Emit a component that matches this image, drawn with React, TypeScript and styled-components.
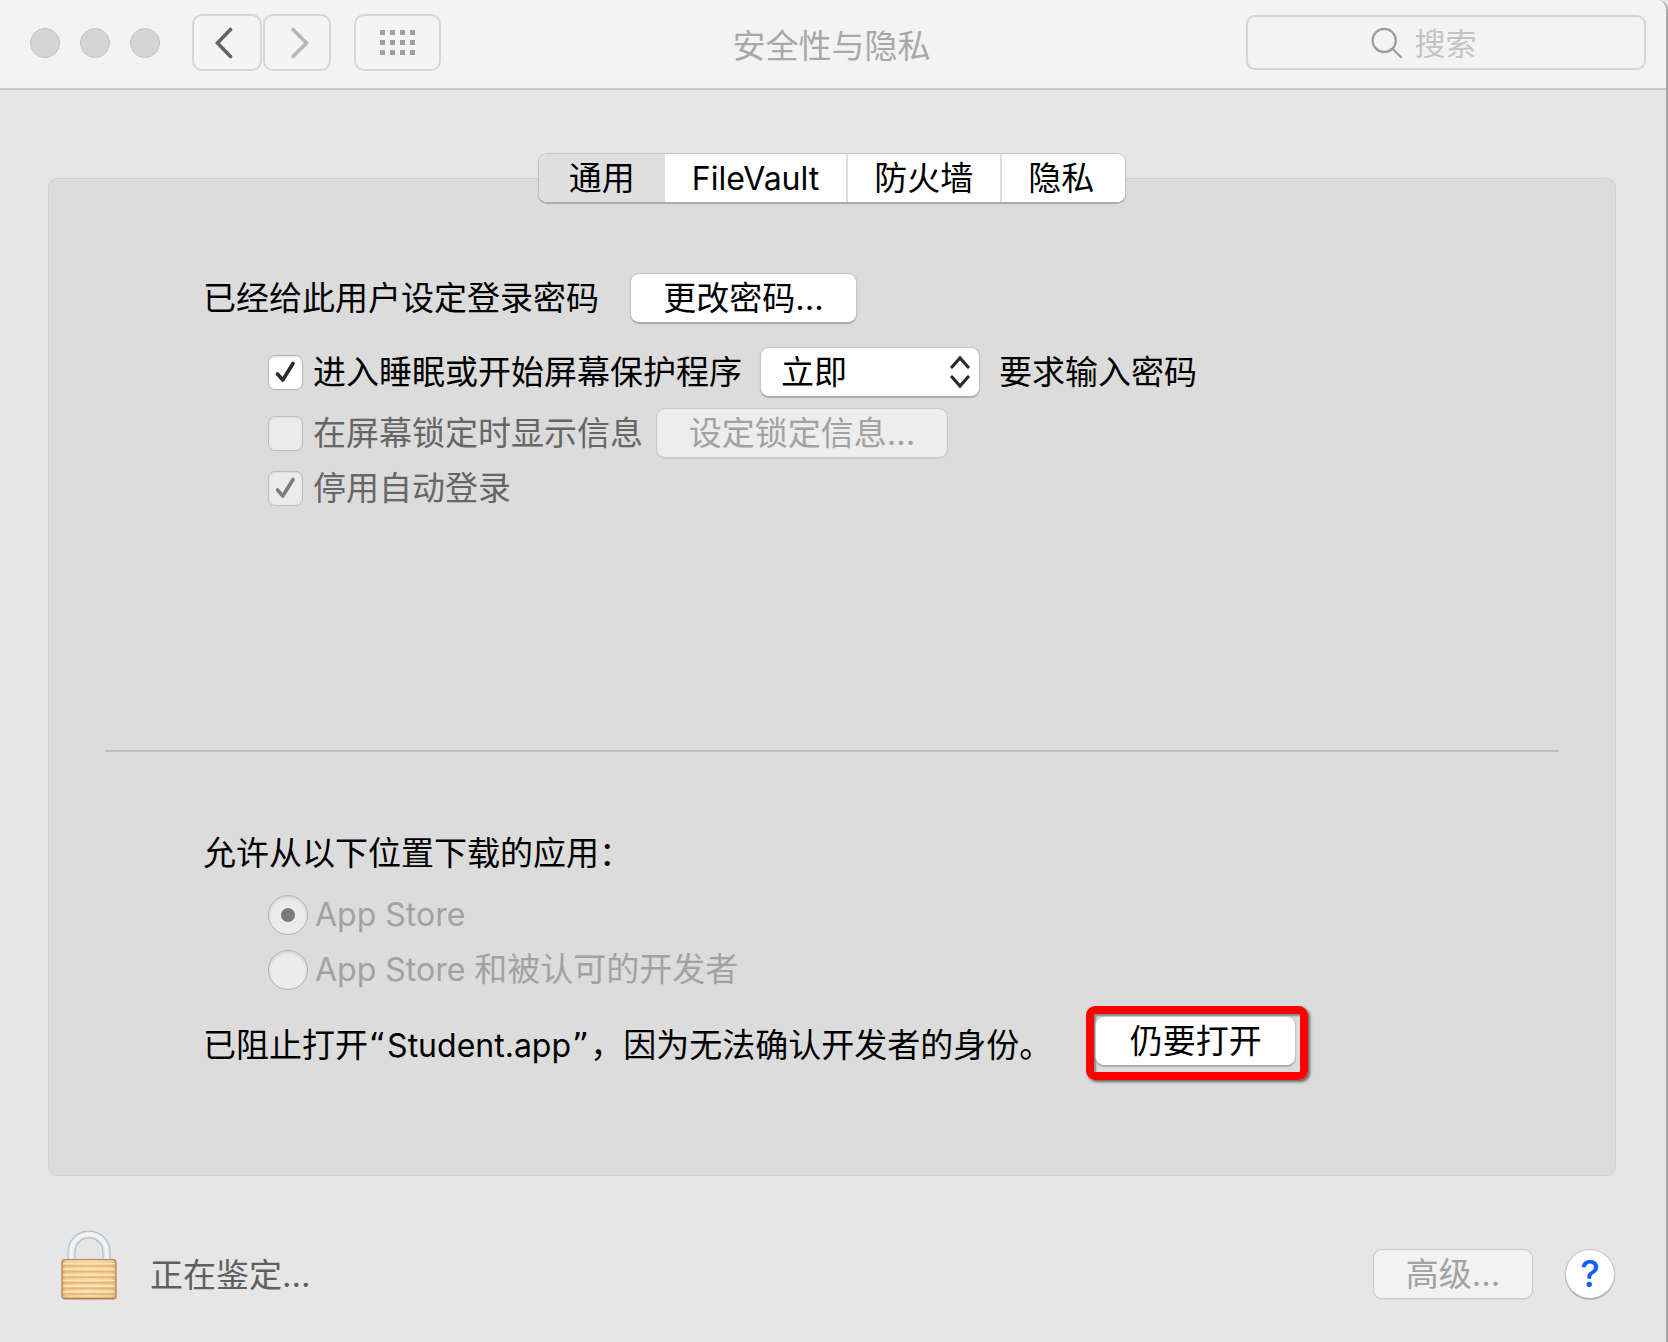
import React, { useState } from "react";
import styled, { createGlobalStyle, css } from "styled-components";

const GlobalStyle = createGlobalStyle`
  *, *::before, *::after { box-sizing: border-box; }
  body {
    margin: 0;
    background: #e6e6e6;
    color: #000;
    font-family: Inter, "Noto Sans CJK SC", sans-serif;
    font-size: 33px;
    line-height: 50px;
  }
  button, input, select { font: inherit; color: inherit; margin: 0; }
`;

const Window = styled.div`
  display: flex;
  flex-direction: column;
  min-height: 100vh;
  border-right: 2px solid #a6a6a6;
  border-top-right-radius: 10px;
  background: #e6e6e6;
  overflow: hidden;
`;

const TitleBar = styled.header`
  display: grid;
  grid-template-columns: 1fr auto 1fr;
  align-items: center;
  height: 90px;
  padding-bottom: 3px;
  background: #f3f3f3;
  border-bottom: 2px solid #c6c6c6;
`;

const Controls = styled.div`
  display: flex;
  align-items: center;
  padding-left: 30px;
`;

const Lights = styled.div`
  display: flex;
  gap: 20px;
  margin-right: 32px;
`;

const Light = styled.button`
  width: 30px;
  height: 30px;
  padding: 0;
  border: 1px solid #c2c2c2;
  border-radius: 50%;
  background: #d5d5d5;
`;

const ToolButton = styled.button<{ $width: number }>`
  display: grid;
  place-items: center;
  width: ${(p) => p.$width}px;
  height: 57px;
  padding: 0;
  border: 2px solid #d6d6d6;
  border-radius: 10px;
  background: #f4f4f4;
  & + & { margin-left: 1px; }
`;

const GridSlot = styled.div`
  margin-left: 23px;
`;

const Title = styled.h1`
  margin: 0;
  padding: 6px 3px 0 0;
  font-size: 33px;
  font-weight: 400;
  color: #a8a8a8;
`;

const SearchBox = styled.label`
  justify-self: end;
  display: flex;
  align-items: center;
  justify-content: center;
  gap: 12px;
  width: 400px;
  height: 55px;
  margin-right: 20px;
  border: 2px solid #d4d4d4;
  border-radius: 9px;
`;

const SearchInput = styled.input`
  width: 107px;
  height: 50px;
  padding: 2px 0 0;
  border: 0;
  outline: 0;
  background: none;
  font-size: 31px;
  color: #555;
  &::placeholder { color: #c4c4c4; opacity: 1; }
`;

const Content = styled.main`
  display: flex;
  flex-direction: column;
  padding: 63px 50px 0 48px;
`;

const raised = css`
  border: 1px solid #c3c3c3;
  border-bottom-color: #a9a9a9;
  border-radius: 9px;
  background: #fff;
  box-shadow: 0 1px 1px rgba(0, 0, 0, 0.22);
`;

const Tabs = styled.div`
  ${raised}
  position: relative;
  z-index: 1;
  display: flex;
  align-self: center;
  height: 50px;
  margin-bottom: -25px;
  overflow: hidden;
`;

const Tab = styled.button<{ $active: boolean }>`
  padding: 0 30px;
  border: 0;
  line-height: 48px;
  background: ${(p) => (p.$active ? "#dfdfdf" : "#fff")};
  & + & { padding: 0 27px; }
  & + & + & { padding: 0 27px 0 26px; border-left: 2px solid #dcdcdc; }
  & + &:last-child { padding-right: 31px; }
`;

const Latin = styled.span`
  font-size: 32px;
`;

const Quote = styled.span`
  margin: 0 1px;
  font-family: "DejaVu Sans", sans-serif;
`;

const Panel = styled.section`
  padding: 94px 55px 95px;
  border: 1px solid #d2d2d2;
  border-radius: 9px;
  background: #dcdcdc;
`;

const Group = styled.div`
  padding-left: 99px;
`;

const Row = styled.div<{ $indent?: boolean; $top?: number }>`
  display: flex;
  align-items: center;
  min-height: 50px;
  margin-top: ${(p) => p.$top ?? 0}px;
  padding-left: ${(p) => (p.$indent ? 65 : 0)}px;
  white-space: nowrap;
`;

const PushButton = styled.button<{ $width: number }>`
  ${raised}
  width: ${(p) => p.$width}px;
  height: 50px;
  padding: 0;
  line-height: 48px;
  &:disabled {
    color: #a2a2a2;
    background: rgba(255, 255, 255, 0.48);
    border-color: #c8c8c8;
    box-shadow: 0 1px 0 rgba(0, 0, 0, 0.06);
  }
`;

const Gap = styled.span<{ $left: number }>`
  display: flex;
  margin-left: ${(p) => p.$left}px;
`;

const CheckLabel = styled.label<{ $dim?: boolean }>`
  display: flex;
  align-items: center;
  gap: 10px;
  color: ${(p) => (p.$dim ? "#666" : "#000")};
`;

const Mark = styled.span`
  display: grid;
  place-items: center;
  & > * { grid-area: 1 / 1; }
  & > svg { pointer-events: none; }
`;

const CheckInput = styled.input`
  appearance: none;
  width: 35px;
  height: 35px;
  border: 1px solid #b4b4b4;
  border-radius: 7px;
  background: #fff;
  box-shadow: inset 0 2px 2px rgba(0, 0, 0, 0.08);
  &:disabled {
    background: #ebebeb;
    border-color: #bcbcbc;
    box-shadow: inset 0 1px 2px rgba(0, 0, 0, 0.08);
  }
`;

const SelectBox = styled.span`
  display: grid;
  align-items: center;
  margin: 0 19px 0 18px;
  & > * { grid-area: 1 / 1; }
  & > svg {
    justify-self: end;
    margin-right: 10px;
    pointer-events: none;
  }
`;

const Select = styled.select`
  ${raised}
  appearance: none;
  width: 220px;
  height: 50px;
  padding: 0 40px 0 20px;
  line-height: 48px;
`;

const Divider = styled.hr`
  height: 2px;
  margin: 237px 1px 76px;
  border: 0;
  background: #c0c0c0;
`;

const RadioLabel = styled.label`
  display: flex;
  align-items: center;
  gap: 7px;
  height: 55px;
  color: #a2a2a2;
`;

const RadioInput = styled.input`
  appearance: none;
  display: grid;
  place-items: center;
  width: 40px;
  height: 40px;
  border: 1px solid #b2b2b2;
  border-radius: 50%;
  background: #ececec;
  box-shadow: inset 0 2px 3px rgba(0, 0, 0, 0.1);
  &:checked::before {
    content: "";
    width: 14px;
    height: 14px;
    border-radius: 50%;
    background: #7a7a7a;
  }
`;

const RadioList = styled.div`
  padding: 9px 0 9px 65px;
`;

const Blocked = styled.span`
  padding-top: 5px;
`;

const Highlight = styled.span`
  display: flex;
  margin-left: 34px;
  padding: 2px 4px 6px 1px;
  border: 8px solid #fe0000;
  border-radius: 9px;
  box-shadow: 2px 2px 3px rgba(0, 0, 0, 0.55), inset 2px 2px 2px rgba(0, 0, 0, 0.4);
`;

const Footer = styled.footer`
  display: flex;
  align-items: center;
  padding: 53px 51px 43px 61px;
`;

const Status = styled.span`
  flex: 1;
  padding: 21px 0 0 33px;
  color: #5f5f5f;
`;

const Actions = styled.div`
  display: flex;
  align-items: center;
  gap: 32px;
  padding-top: 18px;
`;

const HelpButton = styled.button`
  ${raised}
  width: 50px;
  height: 50px;
  padding: 0;
  border-radius: 50%;
  font-size: 37px;
  font-weight: 500;
  line-height: 48px;
  color: #0a60ff;
`;

function Chevron({ dir, color }: { dir: "left" | "right"; color: string }) {
  return (
    <svg width="26" height="32" viewBox="0 0 26 32" fill="none" stroke={color} strokeWidth="3.6" strokeLinecap="round" strokeLinejoin="miter" aria-hidden="true">
      <path d={dir === "left" ? "M16.5 2.5 3.5 16 16.5 29.5" : "M9 2.5 22.5 16 9 29.5"} />
    </svg>
  );
}

function GridIcon() {
  const cells = [0, 1, 2].flatMap((r) => [0, 1, 2, 3].map((c) => [c * 10, r * 10]));
  return (
    <svg width="35" height="25" viewBox="0 0 35 25" fill="#a0a0a0" aria-hidden="true">
      {cells.map(([x, y]) => (
        <rect key={`${x}-${y}`} x={x} y={y} width="5" height="5" />
      ))}
    </svg>
  );
}

function SearchIcon() {
  return (
    <svg width="32" height="32" viewBox="0 0 32 32" fill="none" stroke="#9c9c9c" strokeWidth="2.2" strokeLinecap="round" aria-hidden="true">
      <circle cx="13.2" cy="13.4" r="11.6" />
      <path d="M21.5 21.8 30 30.2" />
    </svg>
  );
}

function Tick({ color }: { color: string }) {
  return (
    <svg width="24" height="24" viewBox="0 0 24 24" fill="none" stroke={color} strokeWidth="3.6" strokeLinecap="round" strokeLinejoin="round" aria-hidden="true">
      <path d="M3.5 14 8.8 20 19 3.5" />
    </svg>
  );
}

function PopupArrows() {
  return (
    <svg width="20" height="34" viewBox="0 0 20 34" fill="none" stroke="#2b2b2b" strokeWidth="3.2" strokeLinecap="round" aria-hidden="true">
      <path d="M2 12 10 3 18 12M2 22 10 31 18 22" />
    </svg>
  );
}

function Lock() {
  const bands = [0, 1, 2, 3, 4, 5];
  return (
    <svg width="56" height="70" viewBox="0 0 56 70" fill="none" aria-hidden="true">
      <defs>
        <linearGradient id="brass" x1="0" x2="1" y1="0" y2="0">
          <stop offset="0" stopColor="#dba766" />
          <stop offset="0.08" stopColor="#f1cc92" />
          <stop offset="0.5" stopColor="#f9daa5" />
          <stop offset="0.92" stopColor="#f1cc92" />
          <stop offset="1" stopColor="#d8a263" />
        </linearGradient>
      </defs>
      <path d="M10.5 31V22a17.5 17.5 0 0 1 35 0v9" stroke="#b2bac0" strokeWidth="8" />
      <path d="M10.5 31V22a17.5 17.5 0 0 1 35 0v9" stroke="#dde3e7" strokeWidth="6.2" />
      <path d="M10.3 31V22a17.7 17.7 0 0 1 35.4 0v9" stroke="#f1f4f6" strokeWidth="3.6" />
      <rect x="1" y="29.5" width="54" height="39.5" rx="3" fill="url(#brass)" stroke="#b98052" strokeWidth="1.2" />
      {bands.map((i) => (
        <g key={i}>
          <path d={`M2 ${36 + i * 5.6}H54`} stroke="#e3b377" strokeWidth="1.6" />
          <path d={`M2 ${33.6 + i * 5.6}H54`} stroke="#fbe6bb" strokeWidth="1.4" />
        </g>
      ))}
      <path d="M3 68.4H53" stroke="#b0764a" strokeWidth="1.2" />
    </svg>
  );
}

const TAB_NAMES = [
  { name: "通用", latin: false },
  { name: "FileVault", latin: true },
  { name: "防火墙", latin: false },
  { name: "隐私", latin: false },
];

export default function App() {
  const [tab, setTab] = useState(0);
  const [requirePassword, setRequirePassword] = useState(true);

  return (
    <>
      <GlobalStyle />
      <Window>
        <TitleBar>
          <Controls>
            <Lights>
              <Light aria-label="关闭" />
              <Light aria-label="最小化" />
              <Light aria-label="缩放" />
            </Lights>
            <ToolButton $width={70} aria-label="后退">
              <Chevron dir="left" color="#636363" />
            </ToolButton>
            <ToolButton $width={68} aria-label="前进">
              <Chevron dir="right" color="#b6b6b6" />
            </ToolButton>
            <GridSlot>
              <ToolButton $width={87} aria-label="显示全部">
                <GridIcon />
              </ToolButton>
            </GridSlot>
          </Controls>
          <Title>安全性与隐私</Title>
          <SearchBox>
            <SearchIcon />
            <SearchInput type="text" placeholder="搜索" aria-label="搜索" />
          </SearchBox>
        </TitleBar>

        <Content>
          <Tabs role="tablist">
            {TAB_NAMES.map(({ name, latin }, i) => (
              <Tab key={name} role="tab" aria-selected={i === tab} $active={i === tab} onClick={() => setTab(i)}>
                {latin ? <Latin>{name}</Latin> : name}
              </Tab>
            ))}
          </Tabs>
          <Panel>
            <Group>
              <Row>
                <span>已经给此用户设定登录密码</span>
                <Gap $left={31}>
                  <PushButton $width={227}>更改密码…</PushButton>
                </Gap>
              </Row>
              <Row $indent $top={24}>
                <CheckLabel>
                  <Mark>
                    <CheckInput type="checkbox" checked={requirePassword} onChange={(e) => setRequirePassword(e.target.checked)} />
                    {requirePassword && <Tick color="#2b2b2b" />}
                  </Mark>
                  进入睡眠或开始屏幕保护程序
                </CheckLabel>
                <SelectBox>
                  <Select aria-label="要求输入密码的时间" defaultValue="now">
                    <option value="now">立即</option>
                  </Select>
                  <PopupArrows />
                </SelectBox>
                <span>要求输入密码</span>
              </Row>
              <Row $indent $top={11}>
                <CheckLabel $dim>
                  <Mark>
                    <CheckInput type="checkbox" disabled />
                  </Mark>
                  在屏幕锁定时显示信息
                </CheckLabel>
                <Gap $left={13}>
                  <PushButton $width={292} disabled>设定锁定信息…</PushButton>
                </Gap>
              </Row>
              <Row $indent $top={5}>
                <CheckLabel $dim>
                  <Mark>
                    <CheckInput type="checkbox" checked readOnly disabled />
                    <Tick color="#7d7d7d" />
                  </Mark>
                  停用自动登录
                </CheckLabel>
              </Row>
            </Group>
            <Divider />
            <Group>
              <Row>允许从以下位置下载的应用：</Row>
              <RadioList role="radiogroup" aria-label="允许从以下位置下载的应用">
                <RadioLabel>
                  <RadioInput type="radio" name="source" checked readOnly disabled />
                  <Latin>App Store</Latin>
                </RadioLabel>
                <RadioLabel>
                  <RadioInput type="radio" name="source" disabled />
                  <span>
                    <Latin>App Store </Latin>和被认可的开发者
                  </span>
                </RadioLabel>
              </RadioList>
              <Row>
                <Blocked>
                  已阻止打开<Quote>“</Quote><Latin>Student.app</Latin><Quote>”</Quote>，因为无法确认开发者的身份。
                </Blocked>
                <Highlight>
                  <PushButton $width={201}>仍要打开</PushButton>
                </Highlight>
              </Row>
            </Group>
          </Panel>
        </Content>

        <Footer>
          <Lock />
          <Status>正在鉴定…</Status>
          <Actions>
            <PushButton $width={160} disabled>高级…</PushButton>
            <HelpButton aria-label="帮助">?</HelpButton>
          </Actions>
        </Footer>
      </Window>
    </>
  );
}
